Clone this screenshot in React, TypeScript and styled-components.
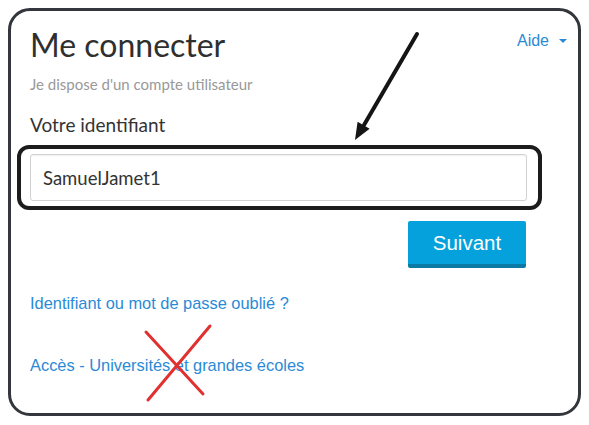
import React from "react";
import styled, { createGlobalStyle } from "styled-components";

const Global = createGlobalStyle`
  html, body { margin: 0; padding: 0; background: #ffffff; }
  * { box-sizing: border-box; }
`;

const Page = styled.div`
  position: relative;
  width: 589px;
  height: 425px;
  padding: 8px;
  background: #ffffff;
`;

const Card = styled.div`
  width: 573px;
  height: 408px;
  border: 3px solid #33373d;
  border-radius: 22px;
  padding: 14px 11px 0 19px;
  background: #ffffff;
`;

const Header = styled.div`
  display: flex;
  justify-content: space-between;
  align-items: flex-start;
`;

const Title = styled.h1`
  margin: 0;
  font-family: Lato, "Liberation Sans", sans-serif;
  font-weight: 400;
  font-size: 32px;
  line-height: 40px;
  color: #2f2f2f;
`;

const HelpLink = styled.a`
  margin-top: 6px;
  display: flex;
  align-items: center;
  font-family: "Liberation Sans", Arial, sans-serif;
  font-size: 16px;
  line-height: 20px;
  color: #2a8ad6;
  text-decoration: none;
`;

const Caret = styled.span`
  display: inline-block;
  width: 0;
  height: 0;
  margin-left: 10px;
  margin-top: -1px;
  border-top: 4px solid #2a8ad6;
  border-left: 4px solid transparent;
  border-right: 4px solid transparent;
`;

const Column = styled.div`
  width: 497px;
`;

const Subtitle = styled.p`
  margin: 11px 0 0 0;
  font-family: Lato, "Liberation Sans", sans-serif;
  font-size: 15px;
  line-height: 16px;
  color: #999999;
`;

const Label = styled.label`
  display: block;
  margin-top: 23px;
  font-family: Lato, "Liberation Sans", sans-serif;
  font-size: 19px;
  line-height: 20px;
  color: #333333;
`;

const Highlight = styled.div`
  margin: 10px -15px 0 -13px;
  padding: 5px 11px 5px 9px;
  border: 4px solid #1c1c1c;
  border-radius: 12px;
`;

const TextInput = styled.input`
  display: block;
  width: 100%;
  height: 47px;
  padding: 0 12px;
  border: 1px solid #d2d2d2;
  border-radius: 3px;
  box-shadow: inset 0 1px 1px rgba(0, 0, 0, 0.06);
  font-family: Lato, "Liberation Sans", sans-serif;
  font-size: 18.5px;
  color: #333333;
  background: #ffffff;
  outline: none;
`;

const Actions = styled.div`
  display: flex;
  justify-content: flex-end;
  margin-top: 11px;
  padding-right: 1px;
`;

const PrimaryButton = styled.button`
  width: 118px;
  height: 47px;
  padding: 0;
  border: none;
  border-bottom: 4px solid #0b7ba6;
  border-radius: 2px;
  background: #04a1dc;
  color: #ffffff;
  font-family: "Liberation Sans", Arial, sans-serif;
  font-size: 20.5px;
  line-height: 43px;
`;

const TextLink = styled.a<{ $gap: number }>`
  display: block;
  margin-top: ${(p) => p.$gap}px;
  font-family: "Liberation Sans", Arial, sans-serif;
  font-size: 16.4px;
  line-height: 18px;
  color: #2a8ad6;
  text-decoration: none;
  white-space: nowrap;
`;

const Overlay = styled.svg`
  position: absolute;
  left: 0;
  top: 0;
  pointer-events: none;
`;

export default function App() {
  return (
    <>
      <Global />
      <Page>
        <Card>
          <Header>
            <Title>Me connecter</Title>
            <HelpLink href="#">
              Aide
              <Caret />
            </HelpLink>
          </Header>
          <Column>
            <Subtitle>Je dispose d'un compte utilisateur</Subtitle>
            <Label htmlFor="login">Votre identifiant</Label>
            <Highlight>
              <TextInput id="login" defaultValue="SamuelJamet1" readOnly />
            </Highlight>
            <Actions>
              <PrimaryButton>Suivant</PrimaryButton>
            </Actions>
            <TextLink href="#" $gap={26}>
              Identifiant ou mot de passe oublié ?
            </TextLink>
            <TextLink href="#" $gap={44}>
              Accès - Universités et grandes écoles
            </TextLink>
          </Column>
        </Card>
        <Overlay width="589" height="425" viewBox="0 0 589 425">
          <line x1="417" y1="34" x2="364" y2="125" stroke="#151515" strokeWidth="4" strokeLinecap="round" />
          <polygon points="355,140 357.6,121.8 369.6,128.8" fill="#151515" />
          <line x1="146" y1="332" x2="203" y2="394" stroke="#e0302f" strokeWidth="3" strokeLinecap="round" />
          <line x1="210" y1="326" x2="148" y2="400" stroke="#e0302f" strokeWidth="3" strokeLinecap="round" />
        </Overlay>
      </Page>
    </>
  );
}
